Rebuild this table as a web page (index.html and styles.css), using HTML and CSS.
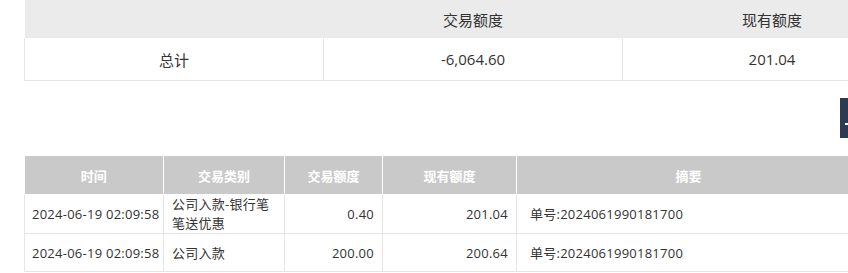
FILE: index.html
```html
<!DOCTYPE html>
<html lang="zh-CN">
<head>
<meta charset="utf-8">
<link rel="stylesheet" href="styles.css">
</head>
<body>
<div class="page">
  <table class="summary">
    <colgroup><col class="s-col"><col class="s-col"><col class="s-col"></colgroup>
    <thead>
      <tr><th></th><th>交易额度</th><th>现有额度</th></tr>
    </thead>
    <tbody>
      <tr><td>总计</td><td>-6,064.60</td><td>201.04</td></tr>
    </tbody>
  </table>

  <div class="spacer"></div>

  <table class="detail">
    <colgroup>
      <col class="c-time"><col class="c-type"><col class="c-amt"><col class="c-cur"><col class="c-memo">
    </colgroup>
    <thead>
      <tr><th>时间</th><th>交易类别</th><th>交易额度</th><th>现有额度</th><th>摘要</th></tr>
    </thead>
    <tbody>
      <tr>
        <td>2024-06-19 02:09:58</td>
        <td>公司入款-银行笔笔送优惠</td>
        <td class="num">0.40</td>
        <td class="num">201.04</td>
        <td class="memo">单号:2024061990181700</td>
      </tr>
      <tr>
        <td>2024-06-19 02:09:58</td>
        <td>公司入款</td>
        <td class="num">200.00</td>
        <td class="num">200.64</td>
        <td class="memo">单号:2024061990181700</td>
      </tr>
    </tbody>
  </table>
</div>
<div class="side-tool"><span class="side-mark"></span></div>
</body>
</html>
```

FILE: styles.css
```css
html, body {
  margin: 0;
  padding: 0;
  background: #ffffff;
}
body {
  font-family: "Open Sans", "Noto Sans CJK SC", sans-serif;
  color: #333333;
  width: 930px;
}
.page {
  padding-left: 24px;
  display: flex;
  flex-direction: column;
  align-items: flex-start;
}
table {
  border-collapse: collapse;
  table-layout: fixed;
}
.summary {
  width: 897px;
  font-size: 15px;
}
.s-col { width: 299px; }
.summary th {
  background: #ebebeb;
  height: 38px;
  padding: 0;
  font-weight: normal;
  text-align: center;
  color: #333;
  border: 0;
}
.summary td {
  height: 42px;
  padding: 0;
  text-align: center;
  border: 1px solid #e6e6e6;
  border-top: 0;
}
.spacer { height: 75px; }

.detail {
  width: 836px;
  font-size: 13px;
}
.c-time { width: 139px; }
.c-type { width: 121px; }
.c-amt { width: 98px; }
.c-cur { width: 134px; }
.c-memo { width: 344px; }
.detail th {
  background: #c9c9c9;
  color: #ffffff;
  font-weight: bold;
  height: 38px;
  padding: 0;
  text-align: center;
  border-right: 1px solid #ffffff;
}
.detail td {
  height: 36px;
  padding: 1px 8px 0 8px;
  line-height: 19px;
  border: 1px solid #e6e6e6;
  border-top: 0;
  text-align: left;
  color: #333;
  letter-spacing: 0.25px;
}
.detail td:first-child { padding-left: 7px; white-space: nowrap; }
.detail td.num { text-align: right; }
.detail td.memo { padding-left: 13px; }

.side-tool {
  position: absolute;
  left: 840px;
  top: 98px;
  width: 30px;
  height: 40px;
  background: #2c3b52;
}
.side-mark {
  position: absolute;
  left: 5px;
  top: 25px;
  width: 4px;
  height: 2px;
  background: #ffffff;
}
```
